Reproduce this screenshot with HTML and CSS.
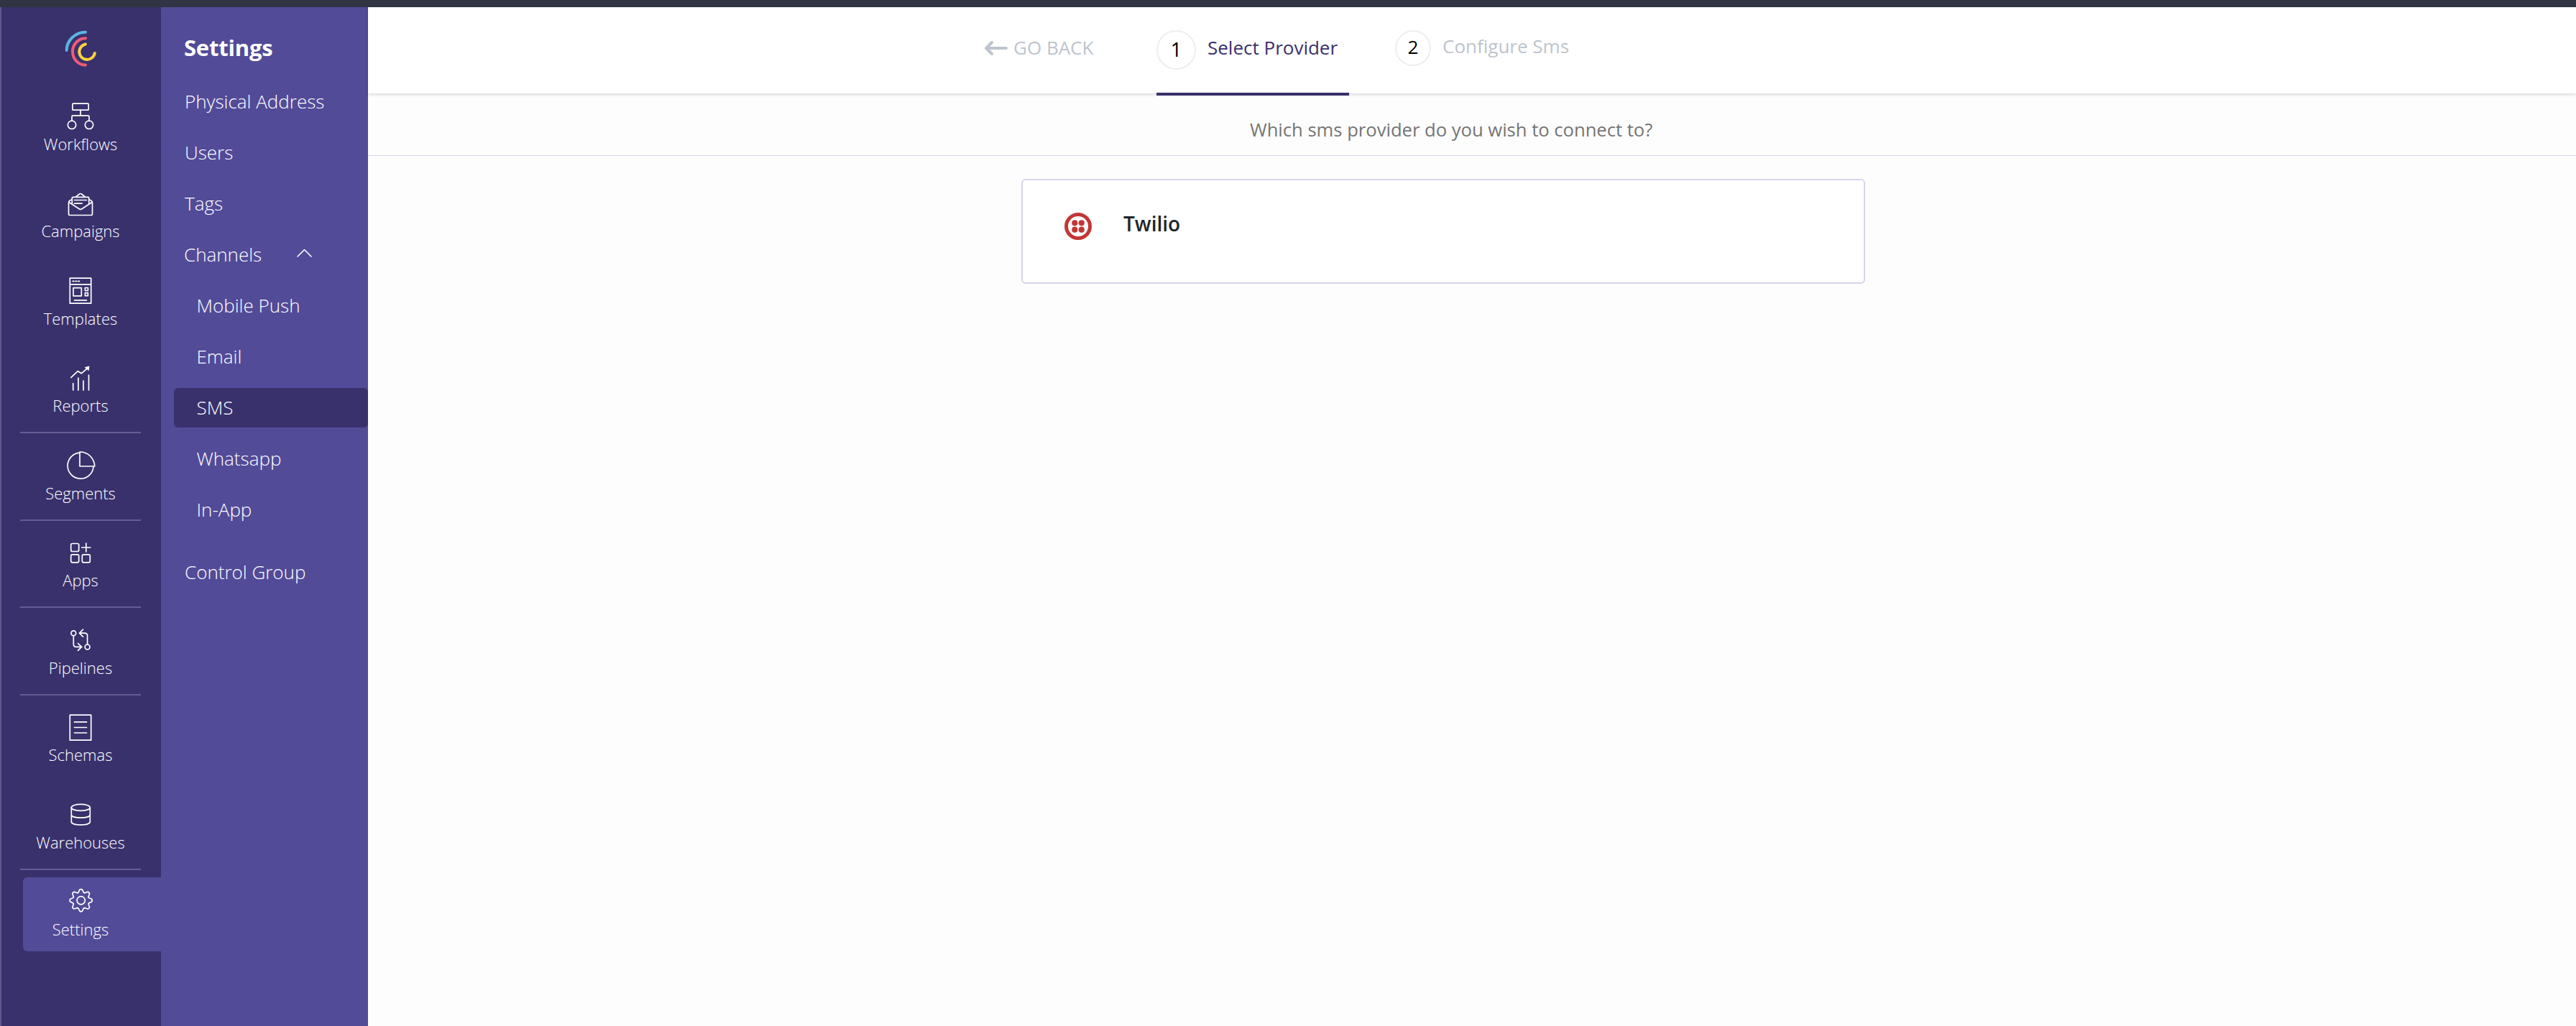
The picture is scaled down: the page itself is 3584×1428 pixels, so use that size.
FILE: index.html
```html
<!DOCTYPE html>
<html lang="en">
<head>
<meta charset="utf-8">
<title>Settings</title>
<link rel="stylesheet" href="styles.css">
</head>
<body>
<div class="topbar"></div>
<div class="app">
  <nav class="rail">
    <svg class="logo" viewBox="0 0 48 56"><path stroke="#59b5e1" d="M31 4.700C16.500 4.700 4.700 16.500 4.700 30"/><path stroke="#ee5c75" d="M31 13.300A18 18.600 0 0 0 31 50.500"/><path stroke="#fed33f" d="M31 21.500A10.800 10.800 0 1 0 43.800 34"/></svg>
    <a class="nav"><svg viewBox="0 0 48 48"><rect x="12.900" y="5.200" width="22.300" height="9" rx="1"/><path d="M24 14.200v7.700M12 29v-5.600q0-1.500 1.500-1.500h21q1.500 0 1.500 1.500V29"/><circle cx="12" cy="34.800" r="5.700"/><circle cx="36" cy="34.800" r="5.700"/></svg><span>Workflows</span></a>
    <a class="nav"><svg viewBox="0 0 48 48"><path d="M12.300 16.800Q7.500 18 7.500 21.500V36.800q0 1.700 1.700 1.700h29.600q1.700 0 1.700-1.700V21.500q0-3.500-4.800-4.700M8 20.500L22.500 30q1.500 1 3 0L40 20.500M12.300 23.500V14.500q0-1.200 1.200-1.200h21q1.200 0 1.200 1.200V23.500M17 13.300L22.500 9q1.500-1 3 0L31 13.300M15.500 17.500h17M15.500 22.200h10.500"/></svg><span>Campaigns</span></a>
    <a class="nav"><svg viewBox="0 0 48 48"><path d="M9.300 5.200h29.400v35H9.300zM9.300 13.800h29.400M14 18.600h11.300v11.200H14zM30.400 18.500h4v4h-4zM30.400 25.700h4v4h-4zM15.500 35.800h17"/><path d="M13.200 9.400h1.600M17 9.400h1.600M20.800 9.400h1.600"/></svg><span>Templates</span></a>
    <a class="nav nav-last"><svg viewBox="0 0 48 48"><path d="M10.800 21.300L20.200 12.600 25.300 15.700 34.300 8.200M13.700 29.500V39M20.900 22V39M28 26V39M35.500 18V39"/><path class="solid" d="M30.500 7.500L36 6l-1 5.500-1.500-1.800z"/></svg><span>Reports</span></a>
    <a class="nav nav-last"><svg viewBox="0 0 48 48"><path d="M23 5.200A18 18 0 1 0 42 25M23 24V4A20.500 20.500 0 0 1 43.700 24Z"/></svg><span>Segments</span></a>
    <a class="nav nav-last"><svg viewBox="0 0 48 48"><rect x="10.700" y="9.500" width="11" height="11" rx="2"/><rect x="10.700" y="24.800" width="11" height="11" rx="2"/><rect x="26.300" y="24.800" width="11" height="11" rx="2"/><path d="M31.800 9v12M25.800 15h12"/></svg><span>Apps</span></a>
    <a class="nav nav-last"><svg viewBox="0 0 48 48"><circle cx="14.300" cy="13.200" r="3.400"/><circle cx="33.600" cy="32.400" r="3.400"/><path d="M14.300 16.800v11.600q0 4 4 4h7.500M20.500 27.500l5 4.900-5 5M33.600 28.800V17.200q0-4-4-4H22.500M27.500 8.200l-5 5 5 4.900"/></svg><span>Pipelines</span></a>
    <a class="nav"><svg viewBox="0 0 48 48"><path d="M9.300 5.200h29.400v35H9.300zM15.500 14.900h17M15.500 22.500h17M15.500 30h17"/></svg><span>Schemas</span></a>
    <a class="nav nav-last"><svg viewBox="0 0 48 48"><ellipse cx="24.300" cy="12.900" rx="13" ry="4.500"/><path d="M11.300 13V32.800C11.300 38.500 37.300 38.500 37.300 32.800V13M11.300 23c0 5.600 26 5.600 26 0"/></svg><span>Warehouses</span></a>
    <a class="nav nav-active"><svg viewBox="0 0 48 48"><defs><path id="tooth" d="M-4.400-10.600C-1.800-11.700-3.600-15.600 0-15.600S1.800-11.700 4.400-10.600"/></defs><g transform="translate(24.700 21.200)"><circle r="5.600"/><use href="#tooth"/><use href="#tooth" transform="rotate(45)"/><use href="#tooth" transform="rotate(90)"/><use href="#tooth" transform="rotate(135)"/><use href="#tooth" transform="rotate(180)"/><use href="#tooth" transform="rotate(225)"/><use href="#tooth" transform="rotate(270)"/><use href="#tooth" transform="rotate(315)"/></g></svg><span>Settings</span></a>
  </nav>
  <aside class="side">
    <h1>Settings</h1>
    <a>Physical Address</a>
    <a>Users</a>
    <a>Tags</a>
    <a class="group">Channels<svg viewBox="0 0 24 14"><path d="M2 11L11.500 1.500 21 11"/></svg></a>
    <a class="sub">Mobile Push</a>
    <a class="sub">Email</a>
    <a class="sub current">SMS</a>
    <a class="sub">Whatsapp</a>
    <a class="sub">In-App</a>
    <a class="after">Control Group</a>
  </aside>
  <main class="main">
    <header class="steps">
      <a class="back"><svg viewBox="0 0 34 22"><path d="M31 11H3.500M11 3L3 11l8 8"/></svg><span>GO BACK</span></a>
      <div class="step step-on"><b>1</b><span>Select Provider</span></div>
      <div class="step step-off"><b>2</b><span>Configure Sms</span></div>
    </header>
    <p class="question">Which sms provider do you wish to connect to?</p>
    <section class="card">
      <svg viewBox="0 0 40 40"><circle cx="20" cy="20" r="16.500"/><g><circle cx="15.300" cy="15.300" r="4.100"/><circle cx="24.700" cy="15.300" r="4.100"/><circle cx="15.300" cy="24.700" r="4.100"/><circle cx="24.700" cy="24.700" r="4.100"/></g></svg>
      <span>Twilio</span>
    </section>
  </main>
</div>
</body>
</html>
```
FILE: styles.css
```css
* { box-sizing: border-box; }
body {
  margin: 0;
  height: 1428px;
  display: flex;
  flex-direction: column;
  overflow: hidden;
  font-family: "Open Sans", "Noto Sans", sans-serif;
  background: #fdfdfd;
}
svg { display: block; fill: none; stroke-linecap: round; stroke-linejoin: round; }
.topbar { height: 10px; background: #313442; }
.app { flex: 1; display: flex; }

.rail {
  width: 224px;
  border-left: 2px solid #5f5b8c;
  background: #39316c;
  color: #fff;
}
.logo { width: 48px; height: 56px; margin: 30px 0 21px 86px; stroke-width: 4; }
.nav {
  display: block;
  position: relative;
  height: 121.5px;
  padding-top: 22px;
  margin-left: -2px;
}
.nav svg { width: 48px; height: 48px; margin: 0 auto -2.5px; stroke: #fff; stroke-width: 1.7; }
.nav .solid { fill: #fff; stroke-width: 1; }
.nav span {
  display: block;
  font-size: 22px;
  font-weight: 300;
  line-height: 30px;
  text-align: center;
}
.nav-last::after {
  content: "";
  position: absolute;
  left: 28px;
  bottom: 0;
  width: 168px;
  height: 2px;
  background: #635d92;
}
.nav-active {
  height: 103px;
  margin: 10.5px 0 0 30px;
  padding: 11px 32px 0 0;
  border-radius: 6px 0 0 6px;
  background: #524b98;
}

.side {
  width: 288px;
  display: flex;
  flex-direction: column;
  gap: 16px;
  padding-left: 18px;
  background: #524b98;
  color: #fff;
}
.side h1 {
  margin: 34px 0 10px 14px;
  font-size: 31px;
  font-weight: 700;
  line-height: 44px;
  letter-spacing: -0.2px;
}
.side a {
  height: 55px;
  padding-left: 15px;
  font-size: 26px;
  font-weight: 300;
  line-height: 55px;
}
.side .group { display: flex; align-items: center; gap: 48px; padding-left: 14px; }
.group svg { width: 24px; height: 14px; margin-top: -3px; stroke: #fff; stroke-width: 1.6; }
.side .sub { padding-left: 31.5px; }
.side .current { border-radius: 6px; background: #39316c; }
.side .after { margin-top: 16px; }

.main { flex: 1; }
.steps {
  height: 120px;
  display: flex;
  align-items: flex-start;
  padding-left: 857px;
  background: #fff;
  box-shadow: 0 2px 4px rgba(0, 0, 0, 0.14);
  font-size: 26px;
  line-height: 36px;
  color: #bdc4cd;
  white-space: nowrap;
}
.back { width: 240px; display: flex; gap: 7px; padding-top: 38px; }
.back svg { width: 34px; height: 22px; margin-top: 8px; stroke: #bdc4cd; stroke-width: 4; }
.step { display: flex; }
.step b {
  border: 2px solid #eee;
  border-radius: 50%;
  font-weight: 400;
  color: #000;
  text-align: center;
}
.step-on {
  width: 268px;
  height: 123px;
  padding-top: 32px;
  border-bottom: 4px solid #39316c;
  color: #39316c;
}
.step-on b { width: 55px; height: 55px; line-height: 48px; font-size: 28px; margin-right: 16px; }
.step-on span { padding-top: 6px; }
.step-off { margin-left: 64px; padding-top: 32px; }
.step-off b { width: 50px; height: 50px; line-height: 43px; margin-right: 16px; }
.step-off span { padding-top: 4px; }
.question {
  height: 87px;
  margin: 0;
  padding: 33px 0 0 1227px;
  border-bottom: 1px solid #d6d5ec;
  font-size: 25.6px;
  line-height: 36px;
  color: #757575;
}
.card {
  width: 1174px;
  height: 146px;
  display: flex;
  margin: 32px 0 0 909px;
  padding: 43px 0 0 57px;
  border: 2px solid #d6d5ec;
  border-radius: 6px;
  background: #fff;
}
.card svg { width: 40px; height: 40px; margin-top: 0.5px; stroke: #c13735; stroke-width: 5; }
.card g { fill: #c13735; stroke: none; }
.card span {
  margin-left: 43px;
  font-size: 28px;
  font-weight: 600;
  line-height: 34px;
  color: #212529;
}
```
